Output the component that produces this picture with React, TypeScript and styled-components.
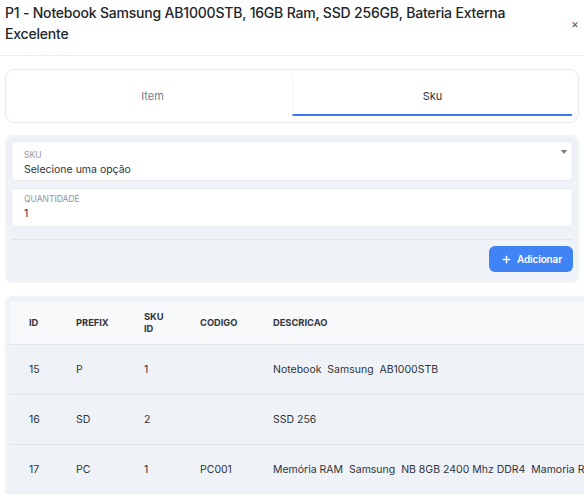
import React from "react";
import styled, { createGlobalStyle } from "styled-components";
import { Plus } from "lucide-react";

const Global = createGlobalStyle`
  html, body { margin: 0; padding: 0; background: #ffffff; overflow: hidden; }
  body { font-family: Inter, "Noto Sans", "Liberation Sans", sans-serif; color: #2b2f36; }
  * { box-sizing: border-box; }
`;

const Page = styled.div`
  width: 584px;
  height: 499px;
  overflow: hidden;
  display: flex;
  flex-direction: column;
`;

const Header = styled.header`
  display: flex;
  align-items: center;
  justify-content: space-between;
  padding: 2px 5px 11px 5px;
  border-bottom: 1px solid #ececef;
`;

const Title = styled.h1`
  margin: 0;
  max-width: 540px;
  font-size: 14px;
  line-height: 21px;
  letter-spacing: -0.2px;
  font-weight: 500;
  color: #222529;
`;

const Close = styled.button`
  border: 0;
  background: transparent;
  padding: 0;
  margin-right: 0;
  margin-top: 2px;
  font-size: 12px;
  line-height: 12px;
  color: #555a61;
  font-family: inherit;
`;

const Body = styled.div`
  display: flex;
  flex-direction: column;
  padding: 13px 5px 0 5px;
  gap: 12px;
`;

const TabCard = styled.div`
  display: grid;
  grid-template-columns: 1fr 1fr;
  padding: 6px;
  background: #fff;
  border: 1px solid #e8eaee;
  border-radius: 10px;
`;

const Tab = styled.div<{ $active?: boolean }>`
  height: 40px;
  display: flex;
  align-items: center;
  justify-content: center;
  font-size: 11px;
  color: ${(p) => (p.$active ? "#30343a" : "#7a808a")};
  border-bottom: 2px solid ${(p) => (p.$active ? "#3b7bf0" : "transparent")};
  border-left: 1px solid ${(p) => (p.$active ? "#f1f2f4" : "transparent")};
  padding-top: 1px;
`;

const FormPanel = styled.section`
  display: flex;
  flex-direction: column;
  padding: 6px 6px 11px 6px;
  background: #eff2f7;
  border-radius: 8px;
`;

const Field = styled.div<{ $h: number; $pt: number }>`
  position: relative;
  height: ${(p) => p.$h}px;
  background: #fff;
  border: 1px solid #e7eaef;
  border-radius: 4px;
  padding: ${(p) => p.$pt}px 12px 0 12px;
  display: flex;
  flex-direction: column;
  & + & { margin-top: 7px; }
`;

const FieldLabel = styled.span`
  font-size: 8.5px;
  line-height: 12px;
  color: #8f949c;
  text-transform: uppercase;
`;

const FieldValue = styled.span`
  font-size: 10.5px;
  line-height: 16px;
  color: #30343a;
  margin-top: 1px;
`;

const Caret = styled.span`
  position: absolute;
  right: 5px;
  top: 8px;
  width: 0;
  height: 0;
  border-left: 3px solid transparent;
  border-right: 3px solid transparent;
  border-top: 4px solid #74787f;
`;

const Divider = styled.hr`
  border: 0;
  border-top: 1px solid #e2e6ec;
  margin: 12px 0 0 0;
`;

const Actions = styled.div`
  display: flex;
  justify-content: flex-end;
  margin-top: 6px;
`;

const AddButton = styled.button`
  height: 26px;
  padding: 0 11px 0 12px;
  margin-right: 0;
  display: inline-flex;
  align-items: center;
  gap: 5px;
  border: 0;
  border-radius: 6px;
  background: #3f83f5;
  color: #fff;
  font-family: inherit;
  font-size: 10px;
  font-weight: 600;
  letter-spacing: -0.15px;
`;

const TablePanel = styled.section`
  width: 720px;
  padding: 6px 0 0 5px;
  background: #eff2f7;
  border-radius: 8px 8px 0 0;
  margin-top: 1px;
`;

const Table = styled.table`
  border-collapse: collapse;
  table-layout: fixed;
  width: 715px;
  color: #30343a;
`;

const HeadRow = styled.tr`
  background: #f7f9fb;
  height: 42px;
`;

const Th = styled.th<{ $w?: number }>`
  ${(p) => (p.$w ? `width: ${p.$w}px;` : "")}
  text-align: left;
  padding: 0 0 0 19px;
  font-size: 9.3px;
  line-height: 12px;
  font-weight: 700;
  color: #33373d;
  white-space: nowrap;
  vertical-align: middle;
`;

const Tr = styled.tr`
  height: 50px;
  border-top: 1px solid #e1e5eb;
`;

const Td = styled.td`
  padding: 0 0 0 19px;
  white-space: pre;
  overflow: visible;
  vertical-align: middle;
  font-size: 10.5px;
`;

const rows = [
  { id: "15", prefix: "P", sku: "1", codigo: "", desc: "Notebook  Samsung  AB1000STB" },
  { id: "16", prefix: "SD", sku: "2", codigo: "", desc: "SSD 256" },
  {
    id: "17",
    prefix: "PC",
    sku: "1",
    codigo: "PC001",
    desc: "Memória RAM  Samsung  NB 8GB 2400 Mhz DDR4  Mamoria RAM",
  },
];

export default function App() {
  return (
    <Page>
      <Global />
      <Header>
        <Title>P1 - Notebook Samsung AB1000STB, 16GB Ram, SSD 256GB, Bateria Externa Excelente</Title>
        <Close aria-label="Fechar">×</Close>
      </Header>
      <Body>
        <TabCard>
          <Tab>Item</Tab>
          <Tab $active>Sku</Tab>
        </TabCard>
        <FormPanel>
          <Field $h={40} $pt={7}>
            <FieldLabel>SKU</FieldLabel>
            <FieldValue>Selecione uma opção</FieldValue>
            <Caret />
          </Field>
          <Field $h={39} $pt={4}>
            <FieldLabel>Quantidade</FieldLabel>
            <FieldValue>1</FieldValue>
          </Field>
          <Divider />
          <Actions>
            <AddButton>
              <Plus size={11} strokeWidth={3} />
              Adicionar
            </AddButton>
          </Actions>
        </FormPanel>
        <TablePanel>
          <Table>
            <thead>
              <HeadRow>
                <Th $w={47}>ID</Th>
                <Th $w={68}>PREFIX</Th>
                <Th $w={56}>
                  SKU
                  <br />
                  ID
                </Th>
                <Th $w={73}>CODIGO</Th>
                <Th>DESCRICAO</Th>
              </HeadRow>
            </thead>
            <tbody>
              {rows.map((r) => (
                <Tr key={r.id}>
                  <Td>{r.id}</Td>
                  <Td>{r.prefix}</Td>
                  <Td>{r.sku}</Td>
                  <Td>{r.codigo}</Td>
                  <Td>{r.desc}</Td>
                </Tr>
              ))}
            </tbody>
          </Table>
        </TablePanel>
      </Body>
    </Page>
  );
}
